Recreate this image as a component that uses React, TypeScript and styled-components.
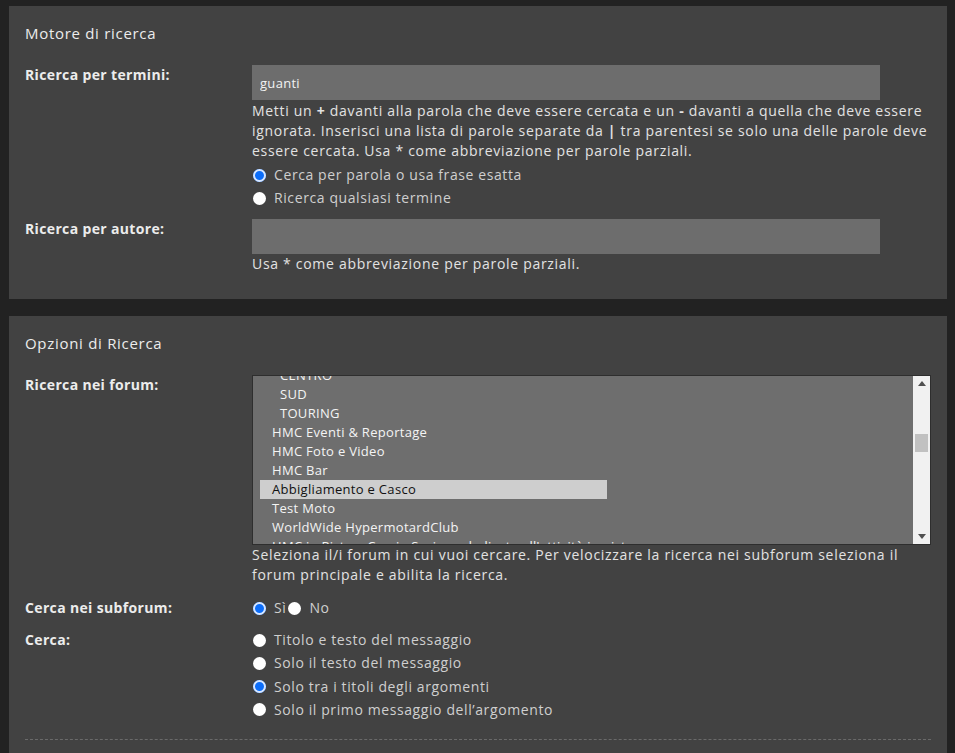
import styled, { createGlobalStyle } from "styled-components";

const GlobalStyle = createGlobalStyle`
  html, body {
    margin: 0;
    padding: 0;
    background: #222222;
  }
  body {
    font-family: "Open Sans", "Liberation Sans", sans-serif;
    color: #e6e6e6;
  }
`;

const forums = [
  { name: "CENTRO", indent: 1 },
  { name: "SUD", indent: 1 },
  { name: "TOURING", indent: 1 },
  { name: "HMC Eventi & Reportage", indent: 0 },
  { name: "HMC Foto e Video", indent: 0 },
  { name: "HMC Bar", indent: 0 },
  { name: "Abbigliamento e Casco", indent: 0, selected: true },
  { name: "Test Moto", indent: 0 },
  { name: "WorldWide HypermotardClub", indent: 0 },
  { name: "HMC in Pista e Corsi - Sezione dedicata all'attività in pista", indent: 0 },
];

const searchIn = [
  { label: "Titolo e testo del messaggio" },
  { label: "Solo il testo del messaggio" },
  { label: "Solo tra i titoli degli argomenti", checked: true },
  { label: "Solo il primo messaggio dell’argomento" },
];

export default function App() {
  return (
    <StPage>
      <GlobalStyle />
      <StPanel>
        <StTitle>Motore di ricerca</StTitle>
        <StRow>
          <StLabel>Ricerca per termini:</StLabel>
          <StField>
            <StInput defaultValue="guanti" />
            <StHelp $top={1}>
              Metti un <b>+</b> davanti alla parola che deve essere cercata e un <b>-</b> davanti a
              quella che deve essere ignorata. Inserisci una lista di parole separate da <b>|</b> tra
              parentesi se solo una delle parole deve essere cercata. Usa * come abbreviazione per
              parole parziali.
            </StHelp>
            <StRadioList>
              <StRadioLabel>
                <StRadio name="terms" defaultChecked />
                Cerca per parola o usa frase esatta
              </StRadioLabel>
              <StRadioLabel>
                <StRadio name="terms" />
                Ricerca qualsiasi termine
              </StRadioLabel>
            </StRadioList>
          </StField>
        </StRow>
        <StRow $gap={11}>
          <StLabel>Ricerca per autore:</StLabel>
          <StField>
            <StInput />
            <StHelp>Usa * come abbreviazione per parole parziali.</StHelp>
          </StField>
        </StRow>
      </StPanel>

      <StPanel $last>
        <StTitle>Opzioni di Ricerca</StTitle>
        <StRow>
          <StLabel>Ricerca nei forum:</StLabel>
          <StField>
            <StSelect>
              <StOptions>
                {forums.map((f) => (
                  <StOption key={f.name} $indent={f.indent} $selected={!!f.selected}>
                    {f.name}
                  </StOption>
                ))}
              </StOptions>
              <StScrollbar>
                <StArrow viewBox="0 0 8 5">
                  <path d="M0 5 L4 0 L8 5 Z" />
                </StArrow>
                <StTrack>
                  <StThumb />
                </StTrack>
                <StArrow viewBox="0 0 8 5">
                  <path d="M0 0 L4 5 L8 0 Z" />
                </StArrow>
              </StScrollbar>
            </StSelect>
            <StHelp>
              Seleziona il/i forum in cui vuoi cercare. Per velocizzare la ricerca nei subforum
              seleziona il forum principale e abilita la ricerca.
            </StHelp>
          </StField>
        </StRow>
        <StRow $gap={13}>
          <StLabel>Cerca nei subforum:</StLabel>
          <StInline>
            <StRadioLabel $tight>
              <StRadio name="sub" defaultChecked />
              Sì
            </StRadioLabel>
            <StRadioLabel>
              <StRadio name="sub" />
              No
            </StRadioLabel>
          </StInline>
        </StRow>
        <StRow $gap={12}>
          <StLabel>Cerca:</StLabel>
          <StRadioList $spacing={3.3} $top={0}>
            {searchIn.map((s) => (
              <StRadioLabel key={s.label}>
                <StRadio name="where" defaultChecked={!!s.checked} />
                {s.label}
              </StRadioLabel>
            ))}
          </StRadioList>
        </StRow>
        <StDivider />
      </StPanel>
    </StPage>
  );
}

const StPage = styled.div`
  display: flex;
  flex-direction: column;
  gap: 17px;
  padding: 6px 8px 0 9px;
  height: 753px;
  box-sizing: border-box;
  overflow: hidden;
`;

const StPanel = styled.section<{ $last?: boolean }>`
  background: #424242;
  padding: ${(p) => (p.$last ? "18px 16px 40px" : "18px 16px 25px")};
  display: flex;
  flex-direction: column;
  flex-shrink: 0;
`;

const StTitle = styled.h2`
  margin: 0 0 23px;
  font-size: 15px;
  line-height: 18px;
  font-weight: 500;
  letter-spacing: 0.7px;
  color: #ececec;
`;

const StRow = styled.div<{ $gap?: number }>`
  display: grid;
  grid-template-columns: 227px 679px;
  margin-top: ${(p) => p.$gap ?? 0}px;
`;

const StLabel = styled.div`
  font-size: 14px;
  font-weight: 700;
  line-height: 20px;
  letter-spacing: 0.35px;
  color: #ececec;
`;

const StField = styled.div`
  display: flex;
  flex-direction: column;
`;

const StInput = styled.input`
  width: 628px;
  height: 35px;
  box-sizing: border-box;
  border: none;
  outline: none;
  background: #6d6d6d;
  color: #f2f2f2;
  font-family: "Open Sans", "Liberation Sans", sans-serif;
  font-size: 13px;
  letter-spacing: 0.3px;
  padding: 0 8px;
`;

const StHelp = styled.p<{ $top?: number }>`
  margin: ${(p) => p.$top ?? 0}px 0 0;
  font-size: 14px;
  line-height: 20px;
  color: #e2e2e2;
  letter-spacing: 0.7px;

  b {
    font-weight: 700;
  }
`;

const StRadioList = styled.div<{ $spacing?: number; $top?: number }>`
  display: flex;
  flex-direction: column;
  gap: ${(p) => p.$spacing ?? 3}px;
  margin-top: ${(p) => p.$top ?? 4}px;
`;

const StInline = styled.div`
  display: flex;
  align-items: center;
  align-self: start;
`;

const StRadioLabel = styled.label<{ $tight?: boolean }>`
  display: flex;
  align-items: center;
  gap: 8px;
  font-size: 14px;
  line-height: 20px;
  letter-spacing: 0.6px;
  color: #cfcfcf;
  margin-right: ${(p) => (p.$tight ? "1px" : "0")};
`;

const StRadio = styled.input.attrs({ type: "radio" })`
  appearance: none;
  margin: 0 0 0 1px;
  width: 13px;
  height: 13px;
  border-radius: 50%;
  background: #ffffff;
  flex-shrink: 0;

  &:checked {
    background: #0b6dfa;
    box-shadow: inset 0 0 0 2px #d6e6ff;
  }
`;

const StSelect = styled.div`
  display: flex;
  height: 170px;
  box-sizing: border-box;
  border: 1px solid #2e2e2e;
  background: #6e6e6e;
  overflow: hidden;
`;

const StOptions = styled.div`
  flex: 1;
  overflow: hidden;
  padding: 0 7px;
`;

const StOption = styled.div<{ $indent: number; $selected: boolean }>`
  width: 347px;
  height: 19px;
  line-height: 19px;
  white-space: nowrap;
  font-size: 13px;
  letter-spacing: 0.3px;
  padding-left: ${(p) => 12 + p.$indent * 8}px;
  box-sizing: border-box;
  color: ${(p) => (p.$selected ? "#111111" : "#f4f4f4")};
  background: ${(p) => (p.$selected ? "#cecece" : "transparent")};

  &:first-child {
    margin-top: -10px;
  }
`;

const StScrollbar = styled.div`
  width: 17px;
  background: #f1f1f1;
  display: flex;
  flex-direction: column;
  align-items: center;
  padding: 5px 0;
  box-sizing: border-box;
`;

const StArrow = styled.svg`
  width: 8px;
  height: 5px;
  fill: #505050;
  flex-shrink: 0;
`;

const StTrack = styled.div`
  flex: 1;
  width: 100%;
  padding-top: 48px;
  box-sizing: border-box;
  display: flex;
  justify-content: center;
`;

const StThumb = styled.div`
  width: 13px;
  height: 18px;
  background: #c1c1c1;
`;

const StDivider = styled.hr`
  margin: 19px 0 0;
  border: none;
  border-top: 1px dashed #6a6a6a;
`;
